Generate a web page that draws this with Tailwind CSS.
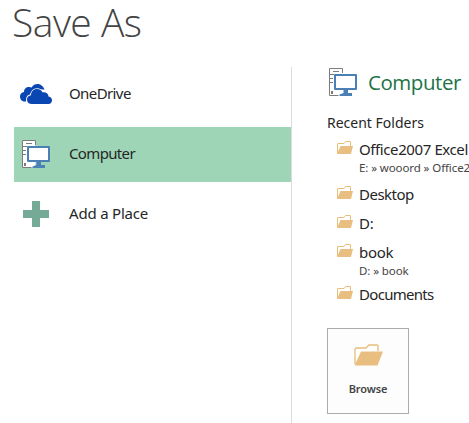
<!DOCTYPE html>
<html lang="en">
<head>
    <meta charset="UTF-8">
    <meta name="viewport" content="width=device-width, initial-scale=1.0">
    <title>Save As</title>
    <script src="https://cdn.jsdelivr.net/npm/@tailwindcss/browser@4"></script>
</head>
<body class="bg-white w-[469px] h-[423px] overflow-hidden font-['Noto_Sans','Open_Sans',sans-serif] text-[#262626]">
    <!-- Shared icons -->
    <svg class="hidden">
        <symbol id="folder" viewBox="0 0 29 22">
            <path d="M1 20V5.500Q1 4 2.500 4H12L15 1H23Q24 1 24 2V7" fill="#fff" stroke="#e8bd78" stroke-width="1.300"/>
            <path d="M0.500 21.500L7 7.500H29L23.500 21.500Z" fill="#e8bf80"/>
        </symbol>
        <symbol id="folder-small" viewBox="0 0 16 13">
            <path d="M.5 12V3Q.5 2.500 1 2.500H7L8.500 .5H13Q13.500 .5 13.500 1V5" fill="#fff" stroke="#e8bd78"/>
            <path d="M0 13L3.500 5H16L14 13Z" fill="#e8bf80"/>
        </symbol>
        <symbol id="computer" viewBox="0 0 28 28">
            <path d="M.5 .5H13.500V27.500H.5Z" fill="#fff"/>
            <path d="M13.500 5V.5H.5V27.500H9.500M4 3.500H10M1 6.500H5M1 10.500H4M1 14.500H4" fill="none" stroke="#7c7c7c"/>
            <path d="M2 23H4V26H2Z" fill="#7c7c7c"/>
            <path d="M6 7H27V21H6Z" fill="#fff" stroke="#4a80b5" stroke-width="2" stroke-linejoin="round"/>
            <path d="M14.500 22H19V25H23V28H10.500V26.500L14.500 25Z" fill="#4a80b5"/>
        </symbol>
    </svg>

    <h1 class="h-[67px] pl-[12px] font-['Open_Sans',sans-serif] text-[39px] leading-[44px] font-light tracking-[-0.5px] text-[#444]">Save As</h1>

    <div class="flex h-[356px]">
        <nav class="flex w-[292px] flex-col gap-[5px] border-r border-[#dcdcdc] pl-[14px] text-[15px]">
            <a class="flex h-[55px] items-center">
                <svg class="ml-[6px] mr-[17px] mb-[2px] h-[20px] w-[32px]" viewBox="0 0 32 20">
                    <path d="M6 17.500H5C2 17.500 0 15.500 0 12.500C0 10 1.500 8.500 4 8C4 5 6 3 9 3C10 3 11 3.300 11.500 3.600C13 1 15 0 17.500 0C21 0 23.500 2.500 24.500 5.500H20L7 12Z" fill="#0b47b3"/>
                    <path d="M12 20C9 20 7 18.500 7 15.500C7 13 8.500 11.500 11 11.300C11 7.500 13.500 5 17 5C19.500 5 21.500 6.200 22.500 8.300C26 7.700 28.500 9.700 28.500 12.500C30.800 12.800 32 14.300 32 16.300C32 18.700 30.500 20 28.500 20Z" fill="#0b47b3" stroke="#fff" stroke-width="1.500" paint-order="stroke"/>
                </svg>
                <span class="mb-[2px] tracking-[-0.6px]">OneDrive</span>
            </a>
            <a class="flex h-[55px] items-center bg-[#9ed5b7]">
                <svg class="ml-[8px] mr-[19px] mb-[1px] size-[28px]"><use href="#computer"/></svg>
                <span class="mb-[2px] tracking-[-0.65px]">Computer</span>
            </a>
            <a class="flex h-[55px] items-center">
                <svg class="ml-[9px] mr-[20px] mb-[1px] size-[26px]" viewBox="0 0 26 26">
                    <path d="M9 0H17V9H26V17H17V26H9V17H0V9H9Z" fill="#75aa96"/>
                </svg>
                <span class="mb-[2px] tracking-[-0.2px]">Add a Place</span>
            </a>
        </nav>

        <main class="w-[177px] overflow-hidden pl-[35px] whitespace-nowrap">
            <h2 class="flex h-[30px] items-center pl-[2px] font-['Open_Sans',sans-serif] text-[20.5px] tracking-[-0.45px] text-[#217346]">
                <svg class="mr-[11px] size-[28px] shrink-0"><use href="#computer"/></svg>
                Computer
            </h2>
            <h3 class="mt-[15px] h-[22px] text-[14px] leading-[22px] tracking-[0px]">Recent Folders</h3>

            <ul class="mt-[5px] text-[15px] leading-[20px]">
                <li class="flex h-[45px] pl-[10px]">
                    <svg class="mr-[6px] mt-[2px] h-[13px] w-[16px] shrink-0"><use href="#folder-small"/></svg>
                    <div>
                        <p class="tracking-[-0.4px]">Office2007 Excel</p>
                        <p class="text-[11.5px] leading-[18px] tracking-[-0.1px] text-[#444]">E: » wooord » Office2007</p>
                    </div>
                </li>
                <li class="flex h-[29px] pl-[10px]">
                    <svg class="mr-[6px] mt-[2px] h-[13px] w-[16px] shrink-0"><use href="#folder-small"/></svg>
                    <p class="tracking-[-0.5px]">Desktop</p>
                </li>
                <li class="flex h-[29px] pl-[10px]">
                    <svg class="mr-[6px] mt-[2px] h-[13px] w-[16px] shrink-0"><use href="#folder-small"/></svg>
                    <p class="tracking-[-0.3px]">D:</p>
                </li>
                <li class="flex h-[42px] pl-[10px]">
                    <svg class="mr-[6px] mt-[2px] h-[13px] w-[16px] shrink-0"><use href="#folder-small"/></svg>
                    <div>
                        <p class="tracking-[-0.3px]">book</p>
                        <p class="text-[11.5px] leading-[18px] tracking-[-0.1px] text-[#444]">D: » book</p>
                    </div>
                </li>
                <li class="flex h-[44px] pl-[10px]">
                    <svg class="mr-[6px] mt-[2px] h-[13px] w-[16px] shrink-0"><use href="#folder-small"/></svg>
                    <p class="tracking-[-0.7px]">Documents</p>
                </li>
            </ul>

            <button class="flex h-[86px] w-[82px] flex-col items-center border border-[#ababab] bg-[#fdfdfd] pt-[15px]">
                <svg class="h-[22px] w-[29px]"><use href="#folder"/></svg>
                <span class="mt-[15px] text-[11px] leading-[16px] font-semibold tracking-[-0.15px] text-[#444]">Browse</span>
            </button>
        </main>
    </div>
</body>
</html>
